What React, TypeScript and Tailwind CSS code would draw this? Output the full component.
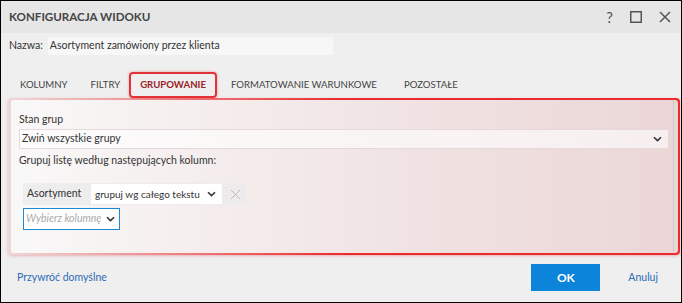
import React from "react";

const font = { fontFamily: 'Lato, "Open Sans", sans-serif' };

function Chevron({ className = "" }: { className?: string }) {
  return (
    <svg width="9" height="6" viewBox="0 0 9 6" className={className}>
      <path d="M1 1.2 L4.5 4.6 L8 1.2" fill="none" stroke="#333" strokeWidth="1.6" />
    </svg>
  );
}

const tabs = [
  { label: "KOLUMNY", cls: "ml-[19px]" },
  { label: "FILTRY", cls: "ml-[23px]" },
  { label: "GRUPOWANIE", cls: "ml-[9px]" },
  { label: "FORMATOWANIE WARUNKOWE", cls: "ml-[14px]" },
  { label: "POZOSTAŁE", cls: "ml-[27px]" },
];

export default function App() {
  return (
    <div
      className="flex h-[303px] w-[682px] flex-col overflow-hidden border border-black bg-[#efefef] text-[10.5px] text-[#333]"
      style={font}
    >
      {/* title bar */}
      <div className="flex h-[32px] shrink-0 items-center justify-between bg-[#e6e6e6] pl-[8px] pr-[10px]">
        <span className="text-[11.6px] font-bold text-[#444]">KONFIGURACJA WIDOKU</span>
        <div className="flex items-center gap-[17px] text-[#555]">
          <span className="text-[15px] leading-none">?</span>
          <svg width="12" height="12" viewBox="0 0 12 12">
            <rect x="0.75" y="0.75" width="10.5" height="10.5" fill="none" stroke="#555" strokeWidth="1.5" />
          </svg>
          <svg width="12" height="12" viewBox="0 0 12 12">
            <path d="M1 1 L11 11 M11 1 L1 11" stroke="#555" strokeWidth="1.5" />
          </svg>
        </div>
      </div>

      {/* name */}
      <div className="mt-[4px] flex h-[18px] items-center pl-[8px]">
        <span>Nazwa:</span>
        <div className="ml-[5px] flex h-[18px] w-[285px] items-center bg-[#f7f7f7] pl-[2px]">
          Asortyment zamówiony przez klienta
        </div>
      </div>

      {/* tabs */}
      <div className="mt-[17px] flex h-[26px] items-center text-[9.6px] text-[#444]">
        {tabs.map((t) =>
          t.label === "GRUPOWANIE" ? (
            <div
              key={t.label}
              className={`${t.cls} flex h-[26px] items-center rounded-[4px] border-2 border-[#e3333a] px-[9px] font-bold text-[#9a2126] shadow-[0_0_3px_rgba(200,0,0,0.35)]`}
            >
              {t.label}
            </div>
          ) : (
            <div key={t.label} className={`${t.cls} whitespace-nowrap`}>
              {t.label}
            </div>
          )
        )}
      </div>

      {/* panel with fading red highlight */}
      <div className="ml-[7px] mr-[1px] h-[157px] shrink-0 rounded-[4px] bg-gradient-to-r from-[rgba(236,43,47,0.12)] via-[#ec2b2f] to-[#ec2b2f] p-[2px] shadow-[0_1px_3px_rgba(220,0,0,0.25)]">
        <div className="h-full rounded-[3px] border-l border-[#dcdcdc] bg-gradient-to-r from-[#f9f8f8] via-[#f2e6e6] to-[#ebd6d6]">
          <div className="mr-[4px] flex h-full flex-col border-r border-[#d9c6c6] pl-[8px] pr-[4px]">
            <div className="mt-[12px] leading-[14px]">Stan grup</div>
            <div className="mt-[3px] flex h-[20px] items-center justify-between border border-[#e6d9d9] bg-white/60 pl-[2px] pr-[6px]">
              <span>Zwiń wszystkie grupy</span>
              <Chevron />
            </div>
            <div className="mt-[4px] leading-[14px]">Grupuj listę według następujących kolumn:</div>

            <div className="ml-[4px] mt-[16px] flex h-[22px] w-[223px] items-center bg-[#ebebeb]/80">
              <span className="ml-[4px] w-[64px] whitespace-nowrap">Asortyment</span>
              <div className="flex h-[20px] w-[131px] items-center justify-between whitespace-nowrap bg-white pl-[4px] pr-[6px]">
                <span className="text-[10px]">grupuj wg całego tekstu</span>
                <Chevron />
              </div>
              <svg width="11" height="11" viewBox="0 0 11 11" className="ml-[8px]">
                <path d="M1 1 L10 10 M10 1 L1 10" stroke="#bbb" strokeWidth="1" />
              </svg>
            </div>
            <div className="ml-[4px] mt-[3px] flex h-[22px] w-[97px] items-center justify-between whitespace-nowrap border border-[#1a8ad6] bg-white pl-[2px] pr-[4px]">
              <span className="italic text-[#aaa]">Wybierz kolumnę</span>
              <Chevron />
            </div>
          </div>
        </div>
      </div>

      {/* footer */}
      <div className="flex flex-1 items-center justify-between pb-[2px] pl-[16px] pr-[23px]">
        <span className="text-[#2a6cb5]">Przywróć domyślne</span>
        <div className="flex items-center gap-[28px]">
          <button className="flex h-[27px] w-[69px] items-center justify-center bg-[#0b84d9] text-[12px] font-bold text-white">
            OK
          </button>
          <span className="text-[#2a6cb5]">Anuluj</span>
        </div>
      </div>
    </div>
  );
}
